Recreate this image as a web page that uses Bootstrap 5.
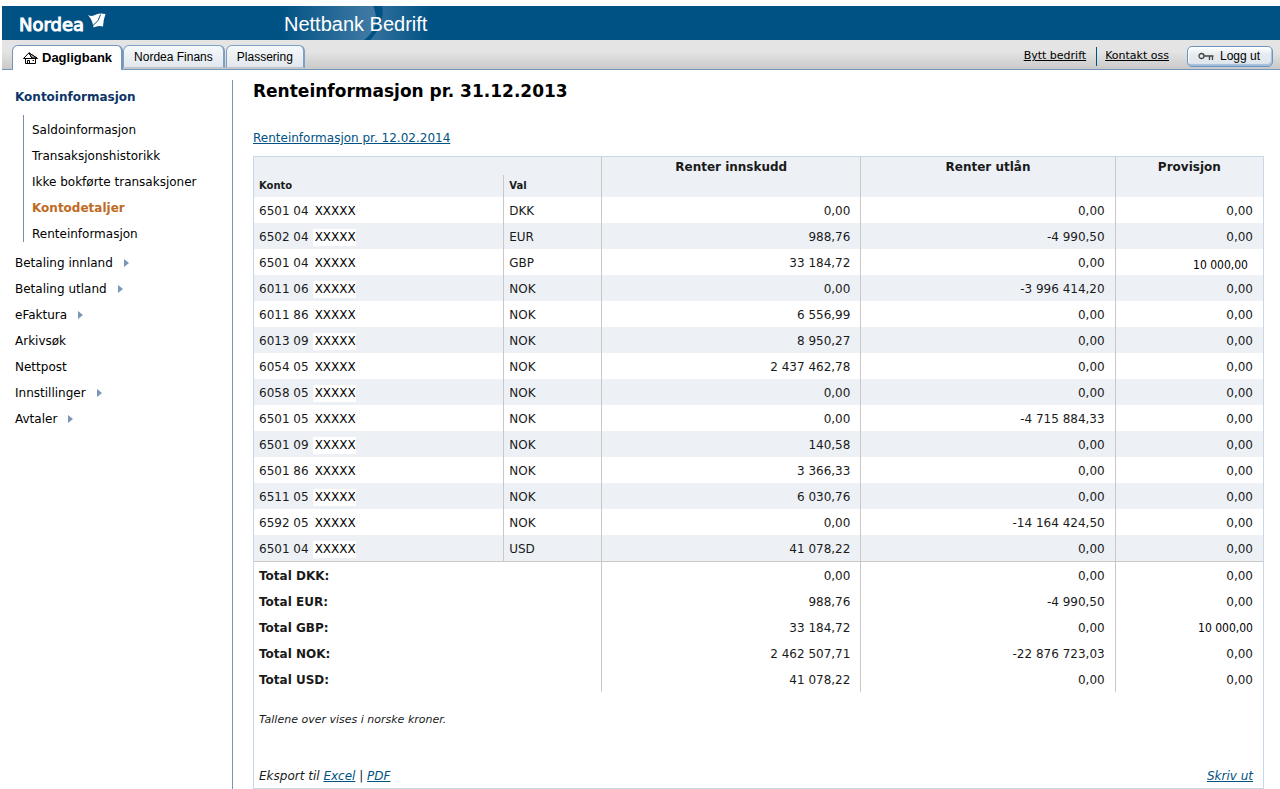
<!DOCTYPE html>
<html lang="no">
<head>
<meta charset="utf-8">
<meta name="viewport" content="width=device-width, initial-scale=1">
<title>Nordea Nettbank Bedrift – Renteinformasjon</title>
<link href="https://cdn.jsdelivr.net/npm/bootstrap@5.3.0/dist/css/bootstrap.min.css" rel="stylesheet">
<style>
  body { font: 12px/16px "DejaVu Sans", Verdana, sans-serif; color: #1a1a1a; background: #fff; }
  .ui-font { font-family: "Liberation Sans", Arial, sans-serif; }

  /* Brand bar */
  .brand-bar { background: #005284; height: 34px; margin-top: 6px; margin-left: 2px; }
  .brand-logo { width: 259px; padding-left: 17px; gap: 4px; color: #fff; text-decoration: none; font-family: "DejaVu Sans", sans-serif; }
  .brand-word { font-size: 18px; line-height: 20px; padding-top: 9px; -webkit-text-stroke: 1px #fff; }
  .brand-flag { margin-top: 7px; }
  .brand-title { color: #fff; font-size: 20px; line-height: 32px; padding: 2px 26px 0 23px; position: relative; }
  .brand-title svg { position: absolute; inset: 0; width: 100%; height: 100%; }
  .brand-title span { position: relative; }

  /* Tab strip */
  .tab-strip { background: linear-gradient(#e4e4e4 40%, #c9c9c9); border-bottom: 1px solid #7596bc; height: 30px; margin-left: 2px; padding-left: 10px; }
  .tab-strip .nav { padding-top: 5px; }
  .tab-strip .nav-link { height: 23px; padding: 0 10px; line-height: 22px; color: #000; background: linear-gradient(#f6f9fb, #e1e7ed); border: 1px solid #7fa0c2; border-right-width: 2px; border-bottom-color: #bcc3ca; border-radius: 6px 6px 0 0; }
  .tab-strip .nav-link.active { height: 25px; font-size: 13px; padding-right: 9px; background: #fff; color: #000; border-color: #7596bc; border-bottom: 0; font-weight: bold; }
  .tab-strip .nav-link + .nav-link + .nav-link { margin-left: 1px; }
  .top-links { font: 11px/16px "DejaVu Sans", Verdana, sans-serif; padding-top: 3px; color: #000; }
  .top-links a { color: #000; }
  .top-sep { width: 1px; height: 19px; background: #005284; margin: 0 8px 0 10px; }
  .logout-btn { height: 21px; font: 12px/17px "Liberation Sans", Arial, sans-serif; padding: 0 12px 0 10px; gap: 6px; margin: 0 7px 0 18px; border: 1px solid #6b95c0; border-radius: 5px; background: linear-gradient(#fff, #e6ebef 40%, #dfe6ec); box-shadow: inset -1px -2px 1px #a3bedb, inset 1px 1px 1px #fff; color: #000; }

  /* Side menu */
  .side-menu { width: 233px; margin-top: 10px; padding: 9px 0 0 15px; border-right: 1px solid #7596bc; }
  .side-menu a { color: #000; text-decoration: none; line-height: 26px; }
  .side-menu h2 { font-size: 12px; line-height: 16px; font-weight: bold; color: #0d3567; margin: 0 0 10px; }
  .sub-menu { border-left: 1px solid #7a8fab; margin-left: 8px; padding: 2px 0 0 8px; height: 127px; }
  .side-menu .sub-menu a.current { color: #c06a1f; font-weight: bold; }
  .caret-right { border-left: 5px solid #7c96b5; border-top: 4px solid transparent; border-bottom: 4px solid transparent; margin-left: 11px; }

  /* Content */
  .content-area { padding: 11px 16px 0 20px; }
  .content-area h1 { font-size: 17px; line-height: 20px; font-weight: bold; color: #000; margin: 0 0 29px; }
  .content-area a { color: #005284; }
  .report-box { border: 1px solid #c9d7e6; margin-top: 10px; }
  .rates { table-layout: fixed; width: 100%; border-collapse: separate; border-spacing: 0; }
  .col-account { width: 24.8%; }
  .col-currency { width: 9.7%; }
  .col-deposit { width: 25.7%; }
  .col-loan { width: 25.2%; }
  .col-fee { width: 14.6%; }
  .rates th, .rates td { height: 26px; padding: 1px 10px 0 5px; border-right: 1px solid #c8c8c8; vertical-align: middle; text-align: right; }
  .rates tr > .last { border-right: 0; }
  .rates tr > .txt { text-align: left; }
  .rates thead th { background: #edf1f6; height: 18px; padding: 2px 5px 0; text-align: center; vertical-align: top; }
  .rates thead th.minor { height: 22px; font-size: 10px; line-height: 14px; padding-top: 4px; text-align: left; }
  .rates tbody tr:nth-child(even) td { background: #edf1f6; }
  .rates tfoot tr:first-child > * { border-top: 1px solid #c8c8c8; height: 27px; }
  .masked { background: #fff; color: #000; margin-left: 4px; padding: 1px 0 2px 2px; }
  .amount-alt { font-family: "DejaVu Sans Condensed", Tahoma, sans-serif; color: #000; }
  .rates tbody .amount-alt { padding: 6px 15px 0 5px; }
  .note { font-size: 11px; padding: 20px 5px 0; margin: 0 0 40px; }
  .report-foot { padding: 0 10px 4px 5px; }
</style>
</head>
<body>
<header class="ui-font">
  <div class="brand-bar d-flex align-items-start">
    <a class="brand-logo d-flex align-items-start" href="#" aria-label="Nordea">
      <span class="brand-word">Nordea</span>
      <svg class="brand-flag" width="18" height="16" viewBox="0 0 18 16" aria-hidden="true"><path fill="#fff" d="M0 2Q4 4 8 1.500Q12-.3 17.500 1Q15.500 6 15 13.500Q10 12 5.500 14.500Q4.500 7 0 2Z"/><path d="M12.500 1.500Q11.500 8 5 12.500" fill="none" stroke="#005284" stroke-width="1"/></svg>
    </a>
    <div class="brand-title">
      <svg viewBox="0 0 192 34" preserveAspectRatio="none" aria-hidden="true">
        <defs>
          <linearGradient id="glowL"><stop offset="0" stop-color="#5f8db3" stop-opacity="0"/><stop offset="1" stop-color="#5f8db3" stop-opacity=".7"/></linearGradient>
          <linearGradient id="glowR"><stop offset="0" stop-color="#5f8db3" stop-opacity=".55"/><stop offset="1" stop-color="#5f8db3" stop-opacity="0"/></linearGradient>
        </defs>
        <path fill="url(#glowL)" d="M20 0H112Q120 20 103 34H20Z"/>
        <path fill="url(#glowR)" d="M121 0H170V34H109Q124 18 121 0Z"/>
      </svg>
      <span>Nettbank Bedrift</span>
    </div>
  </div>
  <div class="tab-strip d-flex">
    <nav class="nav flex-nowrap align-items-start" aria-label="Hovedmeny">
      <a class="nav-link active d-flex align-items-center" href="#"><svg class="me-1" width="15" height="13" viewBox="0 0 15 13" fill="none" stroke="#000" aria-hidden="true"><path d="M.5 6.500L6 .8L14.500 6.500M6 .8L9 6.500M2.500 6.500V11.500H12.500V6.500M.5 6.500H14.500M4.500 11V8.500H6.500V11M9.500 8.500h1.500"/><path d="M6 1L14 6H9Z" fill="#bbb"/></svg>Dagligbank</a>
      <a class="nav-link" href="#">Nordea Finans</a>
      <a class="nav-link" href="#">Plassering</a>
    </nav>
    <div class="top-links d-flex align-items-center ms-auto">
      <a href="#">Bytt bedrift</a>
      <span class="top-sep"></span>
      <a href="#">Kontakt oss</a>
      <button type="button" class="logout-btn d-flex align-items-center"><svg width="16" height="9" viewBox="0 0 16 9" fill="none" stroke="#444" aria-hidden="true"><circle cx="3.500" cy="4" r="2.500" stroke-width="1.300"/><path d="M6 4H15.500M11.500 4V8M14.500 4V8" stroke-width="1.300"/></svg><span>Logg ut</span></button>
    </div>
  </div>
</header>

<div class="d-flex">
  <nav class="side-menu flex-shrink-0" aria-label="Kontomeny">
    <h2>Kontoinformasjon</h2>
    <div class="sub-menu d-flex flex-column">
      <a href="#">Saldoinformasjon</a>
      <a href="#">Transaksjonshistorikk</a>
      <a href="#">Ikke bokførte transaksjoner</a>
      <a href="#" class="current" aria-current="page">Kontodetaljer</a>
      <a href="#">Renteinformasjon</a>
    </div>
    <div class="d-flex flex-column pt-2">
      <a href="#" class="d-flex align-items-center">Betaling innland<span class="caret-right"></span></a>
      <a href="#" class="d-flex align-items-center">Betaling utland<span class="caret-right"></span></a>
      <a href="#" class="d-flex align-items-center">eFaktura<span class="caret-right"></span></a>
      <a href="#">Arkivsøk</a>
      <a href="#">Nettpost</a>
      <a href="#" class="d-flex align-items-center">Innstillinger<span class="caret-right"></span></a>
      <a href="#" class="d-flex align-items-center">Avtaler<span class="caret-right"></span></a>
    </div>
  </nav>

  <main class="content-area flex-grow-1">
    <h1>Renteinformasjon pr. 31.12.2013</h1>
    <a href="#">Renteinformasjon pr. 12.02.2014</a>
    <div class="report-box">
      <table class="rates">
        <colgroup><col class="col-account"><col class="col-currency"><col class="col-deposit"><col class="col-loan"><col class="col-fee"></colgroup>
        <thead>
          <tr><th colspan="2"></th><th rowspan="2">Renter innskudd</th><th rowspan="2">Renter utlån</th><th rowspan="2" class="last">Provisjon</th></tr>
          <tr><th class="minor">Konto</th><th class="minor">Val</th></tr>
        </thead>
        <tbody>
          <tr><td class="txt">6501 04<span class="masked">XXXXX</span></td><td class="txt">DKK</td><td>0,00</td><td>0,00</td><td class="last">0,00</td></tr>
          <tr><td class="txt">6502 04<span class="masked">XXXXX</span></td><td class="txt">EUR</td><td>988,76</td><td>-4 990,50</td><td class="last">0,00</td></tr>
          <tr><td class="txt">6501 04<span class="masked">XXXXX</span></td><td class="txt">GBP</td><td>33 184,72</td><td>0,00</td><td class="last amount-alt">10 000,00</td></tr>
          <tr><td class="txt">6011 06<span class="masked">XXXXX</span></td><td class="txt">NOK</td><td>0,00</td><td>-3 996 414,20</td><td class="last">0,00</td></tr>
          <tr><td class="txt">6011 86<span class="masked">XXXXX</span></td><td class="txt">NOK</td><td>6 556,99</td><td>0,00</td><td class="last">0,00</td></tr>
          <tr><td class="txt">6013 09<span class="masked">XXXXX</span></td><td class="txt">NOK</td><td>8 950,27</td><td>0,00</td><td class="last">0,00</td></tr>
          <tr><td class="txt">6054 05<span class="masked">XXXXX</span></td><td class="txt">NOK</td><td>2 437 462,78</td><td>0,00</td><td class="last">0,00</td></tr>
          <tr><td class="txt">6058 05<span class="masked">XXXXX</span></td><td class="txt">NOK</td><td>0,00</td><td>0,00</td><td class="last">0,00</td></tr>
          <tr><td class="txt">6501 05<span class="masked">XXXXX</span></td><td class="txt">NOK</td><td>0,00</td><td>-4 715 884,33</td><td class="last">0,00</td></tr>
          <tr><td class="txt">6501 09<span class="masked">XXXXX</span></td><td class="txt">NOK</td><td>140,58</td><td>0,00</td><td class="last">0,00</td></tr>
          <tr><td class="txt">6501 86<span class="masked">XXXXX</span></td><td class="txt">NOK</td><td>3 366,33</td><td>0,00</td><td class="last">0,00</td></tr>
          <tr><td class="txt">6511 05<span class="masked">XXXXX</span></td><td class="txt">NOK</td><td>6 030,76</td><td>0,00</td><td class="last">0,00</td></tr>
          <tr><td class="txt">6592 05<span class="masked">XXXXX</span></td><td class="txt">NOK</td><td>0,00</td><td>-14 164 424,50</td><td class="last">0,00</td></tr>
          <tr><td class="txt">6501 04<span class="masked">XXXXX</span></td><td class="txt">USD</td><td>41 078,22</td><td>0,00</td><td class="last">0,00</td></tr>
        </tbody>
        <tfoot>
          <tr><th class="txt" colspan="2">Total DKK:</th><td>0,00</td><td>0,00</td><td class="last">0,00</td></tr>
          <tr><th class="txt" colspan="2">Total EUR:</th><td>988,76</td><td>-4 990,50</td><td class="last">0,00</td></tr>
          <tr><th class="txt" colspan="2">Total GBP:</th><td>33 184,72</td><td>0,00</td><td class="last amount-alt">10 000,00</td></tr>
          <tr><th class="txt" colspan="2">Total NOK:</th><td>2 462 507,71</td><td>-22 876 723,03</td><td class="last">0,00</td></tr>
          <tr><th class="txt" colspan="2">Total USD:</th><td>41 078,22</td><td>0,00</td><td class="last">0,00</td></tr>
        </tfoot>
      </table>
      <p class="note fst-italic">Tallene over vises i norske kroner.</p>
      <div class="report-foot d-flex justify-content-between fst-italic">
        <span>Eksport til <a href="#">Excel</a> | <a href="#">PDF</a></span>
        <a href="#">Skriv ut</a>
      </div>
    </div>
  </main>
</div>
<script src="https://cdn.jsdelivr.net/npm/bootstrap@5.3.0/dist/js/bootstrap.bundle.min.js"></script>
</body>
</html>
